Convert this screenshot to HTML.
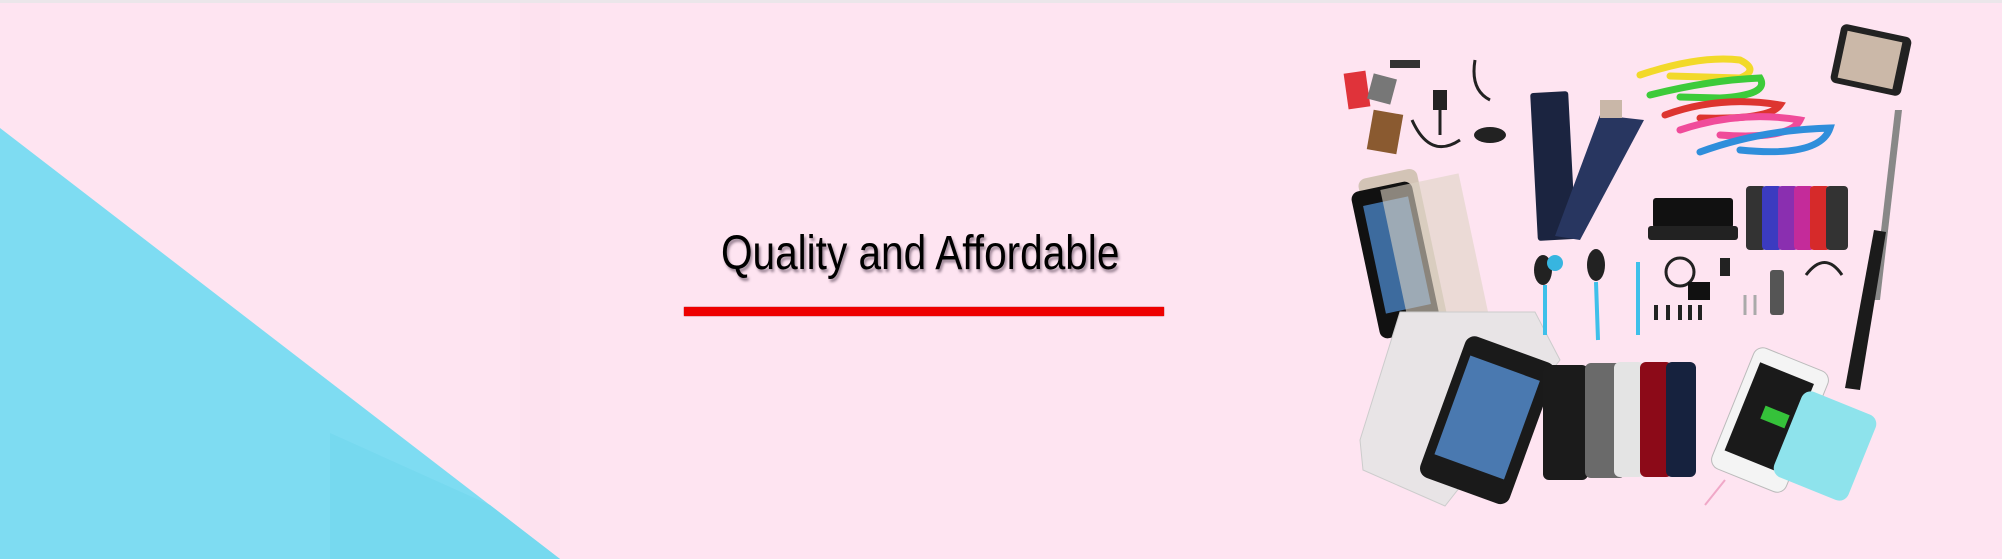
<!DOCTYPE html>
<html><head><meta charset="utf-8"><style>
html,body{margin:0;padding:0}
body{width:2002px;height:559px;overflow:hidden;background:#fee4f1;position:relative;font-family:"Liberation Sans",sans-serif}
.t{position:absolute;left:721px;top:226px;font-size:48px;line-height:56px;color:#000;white-space:nowrap;transform-origin:0 0;transform:scaleX(0.845);text-shadow:2px 3px 3px rgba(60,40,60,0.5)}
.bar{position:absolute;left:684px;top:307px;width:480px;height:9px;background:#ee0000;box-shadow:0 0 1px #900}
</style></head><body>
<svg width="2002" height="559" style="position:absolute;left:0;top:0">
<rect x="0" y="0" width="2002" height="3" fill="#ebe6ea"/>
<rect x="520" y="3" width="40" height="556" fill="#fde2ef"/>
<polygon points="0,128 560,559 0,559" fill="#7edcf2"/>
<polygon points="330,559 330,433 490,505 560,559" fill="#76d9ef"/>
<!-- chargers top-left -->
<rect x="1346" y="72" width="22" height="36" fill="#e0333a" transform="rotate(-8 1357 90)"/>
<rect x="1370" y="76" width="24" height="26" fill="#777" transform="rotate(15 1382 89)"/>
<rect x="1370" y="112" width="30" height="40" fill="#8a5a30" transform="rotate(10 1385 132)"/>
<rect x="1433" y="90" width="14" height="20" fill="#222"/>
<path d="M1412 120 Q1430 160 1460 140 M1440 110 L1440 135 M1475 60 Q1470 90 1490 100" stroke="#222" stroke-width="3" fill="none"/>
<ellipse cx="1490" cy="135" rx="16" ry="8" fill="#222"/>
<rect x="1390" y="60" width="30" height="8" fill="#333"/>
<!-- flip case -->
<rect x="1534" y="92" width="38" height="148" fill="#1b2440" rx="3" transform="rotate(-3 1553 166)"/>
<polygon points="1600,115 1644,120 1580,240 1555,236" fill="#283660"/>
<rect x="1600" y="100" width="22" height="18" fill="#c9b7a8"/>
<!-- cables -->
<g fill="none" stroke-width="7" stroke-linecap="round">
<path d="M1640 75 Q1700 55 1740 60 Q1760 70 1740 78 L1670 76" stroke="#f2d92a"/>
<path d="M1650 95 Q1710 80 1760 78 Q1770 95 1720 98 L1680 97" stroke="#3dcb3a"/>
<path d="M1665 115 Q1720 95 1780 105 Q1770 120 1700 118" stroke="#dd3530"/>
<path d="M1680 130 Q1740 110 1800 120 Q1790 140 1720 135" stroke="#f04b9a"/>
<path d="M1700 152 Q1760 130 1830 128 Q1820 158 1740 150" stroke="#2f8edb"/>
</g>
<!-- selfie stick -->
<polygon points="1895,110 1902,110 1880,300 1873,300" fill="#888"/>
<polygon points="1874,230 1886,232 1860,390 1845,388" fill="#1b1b1b"/>
<rect x="1835" y="30" width="72" height="60" fill="#222" rx="6" transform="rotate(12 1871 60)"/>
<rect x="1842" y="36" width="56" height="48" fill="#cbb8a8" transform="rotate(12 1870 60)"/>
<!-- ipod + mirror -->
<rect x="1373" y="172" width="60" height="160" fill="#c8bca8" rx="8" transform="rotate(-12 1403 252)" opacity=".8"/>
<rect x="1365" y="185" width="62" height="150" fill="#111" rx="8" transform="rotate(-12 1396 260)"/>
<rect x="1374" y="200" width="46" height="110" fill="#3d6b9e" transform="rotate(-12 1397 255)"/>
<rect x="1395" y="180" width="80" height="150" fill="#ddd3c4" opacity=".6" transform="rotate(-12 1435 255)"/>
<!-- screen protector + iphone -->
<polygon points="1400,312 1535,312 1560,360 1445,506 1363,470 1360,440" fill="#e8e4e6" stroke="#ccc"/>
<rect x="1440" y="345" width="95" height="150" fill="#1a1a1a" rx="10" transform="rotate(20 1487 420)"/>
<rect x="1450" y="365" width="74" height="105" fill="#4a79b0" transform="rotate(20 1487 418)"/>
<!-- cases -->
<rect x="1543" y="365" width="45" height="115" fill="#1b1b1b" rx="6"/>
<rect x="1585" y="363" width="40" height="115" fill="#6a6a6a" rx="6"/>
<rect x="1614" y="362" width="30" height="115" fill="#e4e4e4" rx="6"/>
<rect x="1640" y="362" width="32" height="115" fill="#8c0a18" rx="6"/>
<rect x="1666" y="362" width="30" height="115" fill="#16223e" rx="6"/>
<!-- dock -->
<rect x="1653" y="198" width="80" height="30" fill="#111" rx="3"/>
<rect x="1648" y="226" width="90" height="14" fill="#222" rx="3"/>
<!-- colored cases -->
<rect x="1746" y="186" width="20" height="64" fill="#333" rx="4"/>
<rect x="1762" y="186" width="20" height="64" fill="#3b3bc0" rx="4"/>
<rect x="1778" y="186" width="20" height="64" fill="#8a2fb0" rx="4"/>
<rect x="1794" y="186" width="20" height="64" fill="#c42b9a" rx="4"/>
<rect x="1810" y="186" width="20" height="64" fill="#d62a2a" rx="4"/>
<rect x="1826" y="186" width="22" height="64" fill="#333" rx="4"/>
<!-- earphones -->
<ellipse cx="1543" cy="270" rx="9" ry="15" fill="#222"/><circle cx="1555" cy="263" r="8" fill="#37b5e0"/>
<ellipse cx="1596" cy="265" rx="9" ry="16" fill="#222"/>
<path d="M1545 285 L1545 335 M1596 282 L1598 340 M1638 262 L1638 335" stroke="#3ec0ea" stroke-width="4"/>
<!-- small accessories -->
<circle cx="1680" cy="272" r="14" fill="none" stroke="#222" stroke-width="3"/>
<rect x="1688" y="282" width="22" height="18" fill="#111"/>
<rect x="1720" y="258" width="10" height="18" fill="#222"/>
<path d="M1656 305 L1656 320 M1668 305 L1668 320 M1680 305 L1680 320 M1690 305 L1690 320 M1700 305 L1700 320" stroke="#222" stroke-width="4"/>
<rect x="1770" y="270" width="14" height="45" fill="#555" rx="3"/>
<path d="M1806 275 Q1825 250 1842 275" stroke="#222" stroke-width="3" fill="none"/>
<path d="M1745 295 L1745 315 M1755 295 L1755 315" stroke="#aaa" stroke-width="3"/>
<!-- phone + powerbank -->
<rect x="1730" y="355" width="80" height="130" fill="#f4f4f4" stroke="#bbb" rx="10" transform="rotate(22 1770 420)"/>
<rect x="1740" y="370" width="58" height="95" fill="#1a1a1a" transform="rotate(22 1770 418)"/>
<rect x="1762" y="410" width="26" height="14" fill="#35c23a" transform="rotate(22 1775 417)"/>
<rect x="1785" y="400" width="80" height="92" fill="#8ee3ec" rx="10" transform="rotate(22 1825 446)"/>
<path d="M1725 480 L1705 505" stroke="#f0a8c8" stroke-width="2"/>
</svg>
<div class="t">Quality and Affordable</div>
<div class="bar"></div>
</body></html>
